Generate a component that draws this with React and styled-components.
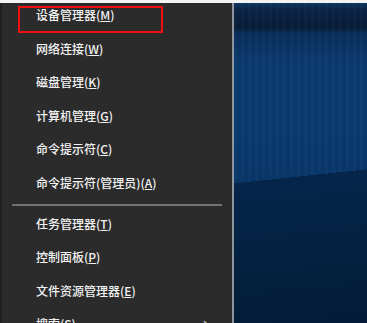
import React from "react";
import styled, { createGlobalStyle } from "styled-components";

const GlobalStyle = createGlobalStyle`
  html, body {
    margin: 0;
    padding: 0;
    background: #ffffff;
  }
  body {
    font-family: "Noto Sans CJK SC", "Noto Sans", sans-serif;
  }
`;

// Whole screenshot
const Screen = styled.div`
  width: 367px;
  height: 323px;
  overflow: hidden;
  border-top: 3px solid #f4f4f4;
  box-sizing: border-box;
  display: flex;
  background: #2b2b2b;
`;

// Win+X menu panel
const Menu = styled.div`
  width: 230px;
  flex-shrink: 0;
  background: #2b2b2b;
  border-left: 2px solid #1f1f1f;
  display: flex;
  flex-direction: column;
`;

const Divider = styled.div`
  width: 2px;
  flex-shrink: 0;
  background: #8f959c;
`;

const Desktop = styled.div`
  flex: 1;
  background:
    linear-gradient(174deg, transparent 54%, #06254b 54%, #04213f 80%, #031b36 100%),
    repeating-linear-gradient(90deg, rgba(255,255,255,0.015) 0 3px, rgba(0,0,0,0.03) 3px 7px),
    linear-gradient(
      to bottom,
      #0f3763 0,
      #0b2546 6px,
      #081c37 24px,
      #0a2f5c 31px,
      #0b3b70 60px,
      #0a3b70 130px,
      #09376a 175px
    );
`;

const Item = styled.div`
  position: relative;
  flex-shrink: 0;
  height: 33.5px;
  box-sizing: border-box;
  padding: 0 0 10px 34px;
  display: flex;
  align-items: center;
  font-size: 12px;
  font-weight: 500;
  color: #f2f2f2;
  white-space: nowrap;
`;

const Key = styled.span`
  text-decoration: underline;
  text-underline-offset: 1px;
`;

const Separator = styled.div`
  flex-shrink: 0;
  height: 1.5px;
  margin: 0 10px 6px 10px;
  background: #727272;
`;

// red annotation frame drawn over the first item
const Highlight = styled.div`
  position: absolute;
  left: 16px;
  top: 3px;
  width: 145px;
  height: 27px;
  border: 2.5px solid #f01010;
  box-sizing: border-box;
`;

const Chevron = styled.span`
  position: absolute;
  left: 194px;
  top: 3px;
  font-size: 12px;
  color: #e0e0e0;
`;

const groups = [
  [
    { label: "设备管理器", key: "M" },
    { label: "网络连接", key: "W" },
    { label: "磁盘管理", key: "K" },
    { label: "计算机管理", key: "G" },
    { label: "命令提示符", key: "C" },
    { label: "命令提示符(管理员)", key: "A" },
  ],
  [
    { label: "任务管理器", key: "T" },
    { label: "控制面板", key: "P" },
    { label: "文件资源管理器", key: "E" },
    { label: "搜索", key: "S", sub: true },
  ],
];

const App = () => {
  return (
    <>
      <GlobalStyle />
      <Screen>
        <Menu>
          {groups.map((group, gi) => (
            <React.Fragment key={gi}>
              {gi > 0 && <Separator />}
              {group.map((item, i) => (
                <Item key={item.key}>
                  {gi === 0 && i === 0 && <Highlight />}
                  {item.label}(<Key>{item.key}</Key>)
                  {item.sub && <Chevron>→</Chevron>}
                </Item>
              ))}
            </React.Fragment>
          ))}
        </Menu>
        <Divider />
        <Desktop />
      </Screen>
    </>
  );
};

export default App;
